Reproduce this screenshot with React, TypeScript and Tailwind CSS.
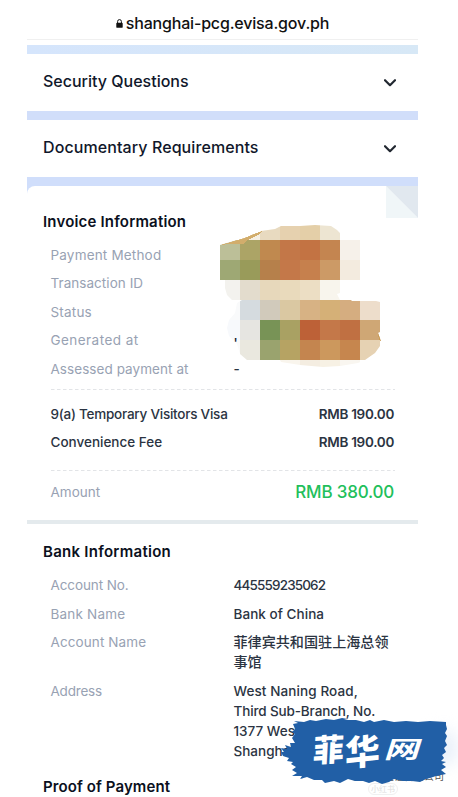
import type { ReactNode } from "react";
import { clsx } from "clsx";

const CELL = 20;

// each row starts at [x, y] and runs to the right in 20px blocks
const MOSAIC: { x: number; y: number; colors: string[] }[] = [
  { x: 40, y: 0, colors: ["#e8dac0", "#e6d1af", "#e4cfa8", "#ede5d2"] },
  { x: 0, y: 20, colors: ["#bcbf98", "#aca466", "#c0894f", "#c37748", "#c37343", "#c48550", "#f6f1ea"] },
  { x: 0, y: 40, colors: ["#9ea874", "#999b5a", "#b6804b", "#c47849", "#c6804d", "#cc9a66", "#f3ebdf"] },
  { x: 0, y: 60, colors: ["#f3f2ee", "#e3dccd", "#e7d8bb", "#e9dabc", "#ecdec4", "#f8f5ed"] },
  { x: 0, y: 80, colors: ["#f9fafb", "#d5dbdf", "#d1cabb", "#dac8a2", "#d7b284", "#d5b077", "#d5ad80", "#edddcb"] },
  { x: 0, y: 100, colors: ["#f7f9fc", "#e6e5e1", "#789356", "#a9a163", "#bd6137", "#c47849", "#c07042", "#cfa775"] },
  { x: 0, y: 120, colors: ["#fafafa", "#eae8df", "#9aa36e", "#b6a363", "#c4854f", "#cc985d", "#c6864e", "#e6d2b3"] },
  { x: 60, y: 140, colors: ["#f9f5ed", "#f4ede1", "#f7f1e4", "#f9f6f0"] },
];

function Mosaic() {
  return (
    <svg
      className="absolute left-[193px] top-[34px]"
      width="164"
      height="150"
      viewBox="0 0 164 150"
      shapeRendering="crispEdges"
    >
      <clipPath id="smudge">
        <path d="M0 25 L7 23 L24 18 L36 13 L41 11 L55 9 L61 6 L80 6 L95 5 L111 6 L117 10 L120 13 V20 H140 V60 H120 V73 L117 74 L120 80 H131 L132 81 H150 L156 81 L160 82 V112 L158 113 L161 121 L160 126 L155 133 L145 140 L138 143 L120 146 L103 147 L80 145 L61 142 L60 140 H27 L20 134 L17 124 L9 116 L7 108 L9 100 L15 93 L17 83 L22 80 L12 80 L7 75 L5 68 V60 H0 Z" />
      </clipPath>
      <g clipPath="url(#smudge)">
        {MOSAIC.map((row) =>
          row.colors.map((color, i) => (
            <rect
              key={`${row.y}-${i}`}
              x={row.x + i * CELL}
              y={row.y}
              width={CELL}
              height={CELL}
              fill={color}
            />
          ))
        )}
        <path d="M0 25 L7 23 L24 18 L36 13 L42 11 L38 15 L30 19 L26 21 L24 24 H7 L2 25 Z" fill="#d2ad6c" />
        <path d="M28 20 L38 15 L40 14 V20 Z" fill="#f5efe3" />
        <path d="M158 113 L161 116 V122 L159 120 Z" fill="#c99b55" />
      </g>
    </svg>
  );
}

function LockIcon() {
  return (
    <svg width="7" height="9" viewBox="0 0 7 9" className="mt-px">
      <rect x="0.3" y="3.8" width="6.4" height="5" rx="0.9" fill="#111" />
      <path d="M1.6 4.2V2.5a1.9 1.9 0 0 1 3.8 0v1.7" fill="none" stroke="#111" strokeWidth="1" />
    </svg>
  );
}

function Accordion({ title, className }: { title: string; className?: string }) {
  return (
    <button className="flex h-[57px] w-full shrink-0 items-center justify-between bg-white pl-4 pr-[22px] text-left">
      <span className={clsx("pb-[3px] text-base font-medium text-[#10172a]", className)}>{title}</span>
      <svg width="12" height="8" viewBox="0 0 12 8" fill="none">
        <path d="M1 1.2 6 6.2 11 1.2" stroke="#222831" strokeWidth="2.2" strokeLinecap="round" strokeLinejoin="round" />
      </svg>
    </button>
  );
}

function Heading({ children, className }: { children: ReactNode; className?: string }) {
  return (
    <h2 className={clsx("text-[15px] font-semibold leading-5 text-[#0b1020]", className)}>
      {children}
    </h2>
  );
}

function Row({ label, labelClass, children }: { label: string; labelClass?: string; children?: ReactNode }) {
  return (
    <div className="flex leading-[20.2px]">
      <dt className={clsx("w-[183px] shrink-0 whitespace-nowrap text-[#98a2b3]", labelClass)}>{label}</dt>
      <dd className="font-medium text-[#2b3442]">{children}</dd>
    </div>
  );
}

function Fee({ label, price, labelClass }: { label: string; price: string; labelClass?: string }) {
  return (
    <div className="flex justify-between leading-[20.2px] text-[#2b3442]">
      <span className={clsx("font-medium", labelClass)}>{label}</span>
      <span className="font-semibold tracking-[-0.3px]">{price}</span>
    </div>
  );
}

function DashedLine() {
  return (
    <svg width="344" height="1" className="block">
      <path d="M0 .5H344" stroke="#e2e4e7" strokeDasharray="3.5 2.5" />
    </svg>
  );
}

function BrushLogo() {
  return (
    <div className="absolute left-[278px] top-[714px] h-[80px] w-[180px]">
      <div className="absolute right-0 top-4 h-9 w-7 rounded-full bg-[#eaf1fa] blur-sm" />
      <span className="absolute right-[14px] top-[56px] whitespace-nowrap text-[10px] leading-[12px] text-[#555]">◎ 菲华签证咨询公司</span>
      <span className="absolute left-[90px] top-[69px] rounded-md border border-[#f0f0f0] px-[2px] text-[8px] leading-[10px] text-[#dddddd]">
        小红书
      </span>
      <svg className="absolute inset-0" width="180" height="80" viewBox="0 0 180 80">
        <path
          fill="#215fa6"
          d="M15 10 L20 9 L16 7 L26 8 L32 6 L38 7 L48 5 L56 6 L64 4 L70 5 L66 6 L78 6 L86 8 L92 6 L96 8 L106 6 L116 8 L128 7 L140 8 L152 7 L168 8 L168 11 L169 15 L167 19 L169 22 L167 27 L169 31 L166 34 L168 38 L164 41 L166 44 L163 47 L168 48 L164 50 L168 53 L163 56 L168 60 L158 62 L152 64 L148 65 L142 68 L134 67 L125 67 L116 65 L111 68 L104 70 L97 67 L91 69 L85 67 L77 67 L70 65 L62 69 L56 67 L47 69 L44 66 L36 66 L29 63 L22 65 L24 62 L14 62 L19 59 L14 56 L18 53 L13 50 L15 48 L9 47 L11 44 L5 42 L3 38 L6 38 L3 34 L9 35 L7 31 L13 33 L12 29 L17 29 L14 24 L17 20 L14 18 L17 15 Z"
        />
      </svg>
      <div className="absolute left-[35px] top-[20px] flex font-black leading-none text-white">
        <span className="w-[32px] -skew-x-6 -rotate-3 text-[31px]">菲</span>
        <span className="w-[45px] -skew-x-6 -rotate-6 text-[35px]">华</span>
        <span className="mt-[3px] w-[36px] origin-top-left -skew-x-12 scale-x-[1.26] scale-y-[0.86] text-[28px] font-bold">网</span>
      </div>
    </div>
  );
}

export default function App() {
  return (
    <div className="relative h-[797px] w-[458px] overflow-hidden bg-white font-[Inter,'Noto_Sans_CJK_SC',sans-serif]">
      <main className="ml-[27px] flex w-[391px] flex-col">
        <header className="flex h-10 shrink-0 items-center justify-center gap-[3px] border-b border-[#f0f0f0] pt-[7px]">
          <LockIcon />
          <span className="text-base font-medium tracking-[-0.18px] text-[#111]">shanghai-pcg.evisa.gov.ph</span>
        </header>
        <div className="mt-[5px] h-[9px] bg-linear-to-r from-[#d5e5fc] to-[#d7e8f6]" />
        <Accordion title="Security Questions" />
        <div className="h-[9px] bg-[#d1defa]" />
        <Accordion title="Documentary Requirements" className="tracking-[0.09px]" />
        <div className="h-[9px] bg-[#d0defb]" />

        <div className="bg-[#d0defb]">
          <section className="relative h-[334px] rounded-tl-lg bg-white pl-4 pt-[26px]">
            <svg width="32" height="32" className="absolute right-0 top-0">
              <path d="M0 0V32H32Z" fill="#f0f6f8" />
              <path d="M0 0H32V32Z" fill="#e1e8ef" />
            </svg>
            <Mosaic />
            <Heading className="tracking-[0.18px]">Invoice Information</Heading>
            <div className="relative ml-[7.5px] mt-[13px] w-[343.5px] text-[13.5px]">
              <dl className="flex flex-col gap-[8.2px]">
                <Row label="Payment Method" labelClass="tracking-[0.18px]" />
                <Row label="Transaction ID" labelClass="tracking-[0.05px]" />
                <Row label="Status" labelClass="tracking-[0.2px]" />
                <Row label="Generated at" labelClass="tracking-[0.45px]">
                  <span className="block pt-[8px] leading-[10px] text-[#10172a]">'</span>
                </Row>
                <Row label="Assessed payment at" labelClass="tracking-[0.06px]">-</Row>
              </dl>
              <div className="mt-[10px]">
                <DashedLine />
              </div>
              <div className="mt-[14px] flex flex-col gap-[8.2px]">
                <Fee label="9(a) Temporary Visitors Visa" price="RMB 190.00" labelClass="tracking-[-0.24px]" />
                <Fee label="Convenience Fee" price="RMB 190.00" />
              </div>
              <div className="mt-[18px]">
                <DashedLine />
              </div>
              <div className="mt-[9px] flex items-center justify-between">
                <span className="text-[#98a2b3]">Amount</span>
                <span className="text-[17px] font-medium leading-6 tracking-[-0.2px] text-[#22bf5b]">RMB 380.00</span>
              </div>
            </div>
          </section>
        </div>

        <div className="h-1 bg-[#e4eaed]" />

        <section className="pl-4 pt-[18px]">
          <Heading className="tracking-[0.27px]">Bank Information</Heading>
          <dl className="ml-[7.5px] mt-[13px] flex w-[343.5px] flex-col gap-[8.3px] text-[13.5px]">
            <Row label="Account No." labelClass="tracking-[-0.1px]">
              <span className="tracking-[-0.85px]">445559235062</span>
            </Row>
            <Row label="Bank Name" labelClass="tracking-[0.2px]">
              <span className="tracking-[0.05px]">Bank of China</span>
            </Row>
            <Row label="Account Name" labelClass="tracking-[0.1px]">
              <span className="text-[14.1px]">菲律宾共和国驻上海总领事馆</span>
            </Row>
            <Row label="Address" labelClass="tracking-[-0.2px]">
              <span className="tracking-[0.1px]">West Naning Road,</span>
              <br />
              <span className="tracking-[-0.13px]">Third Sub-Branch, No.</span>
              <br />
              1377 West Beijing
              <br />
              Shanghai
            </Row>
          </dl>
          <Heading className="mt-[15px] tracking-[0.1px]">Proof of Payment</Heading>
        </section>
      </main>
      <BrushLogo />
    </div>
  );
}
